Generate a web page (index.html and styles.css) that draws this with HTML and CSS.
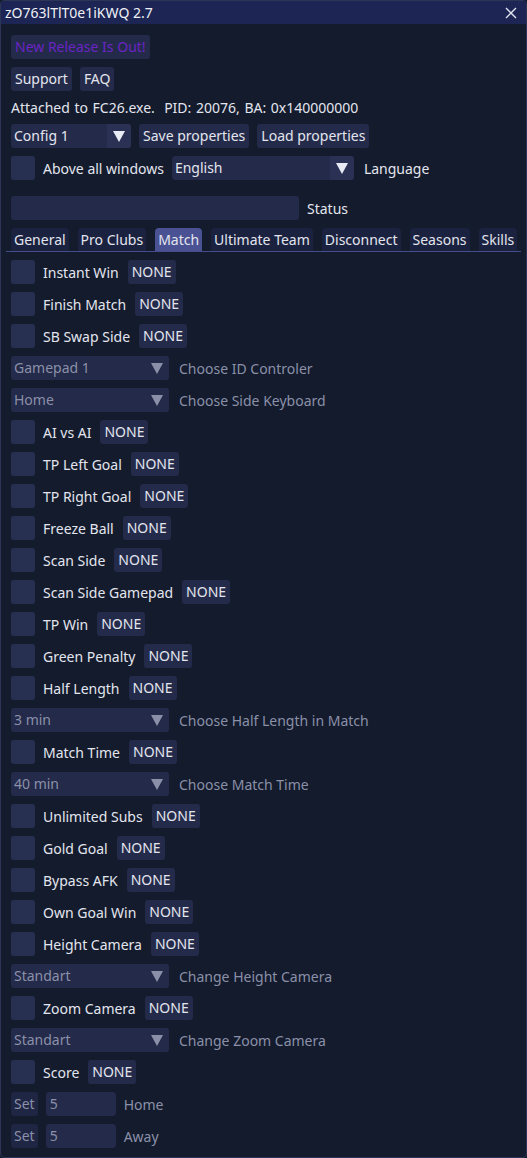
FILE: index.html
```html
<!DOCTYPE html>
<html lang="en">
<head>
  <meta charset="UTF-8">
  <title>zO763lTlT0e1iKWQ 2.7</title>
  <link rel="stylesheet" href="styles.css">
</head>
<body>

  <div class="window">
    <div class="titlebar">
      <span class="title">zO763lTlT0e1iKWQ 2.7</span>
      <svg class="close" width="12" height="12" viewBox="0 0 12 12">
        <path d="M1 1 L11 11 M11 1 L1 11" stroke="#dfe3f0" stroke-width="1.4" fill="none"/>
      </svg>
    </div>

    <div class="content">
      <div class="row"><span class="btn release">New Release Is Out!</span></div>

      <div class="row">
        <span class="btn">Support</span>
        <span class="btn">FAQ</span>
      </div>

      <div class="text-row">Attached to FC26.exe.&nbsp;&nbsp;PID: 20076, BA: 0x140000000</div>

      <div class="row">
        <div class="combo w-config"><span class="value">Config 1</span><span class="arrow"></span></div>
        <span class="btn">Save properties</span>
        <span class="btn">Load properties</span>
      </div>

      <div class="row">
        <span class="check"></span><span class="label">Above all windows</span>
        <div class="combo w-lang"><span class="value">English</span><span class="arrow"></span></div>
        <span class="label">Language</span>
      </div>

      <div class="row spaced">
        <div class="input w-status"></div>
        <span class="label">Status</span>
      </div>

      <div class="tabs">
        <span class="tab">General</span>
        <span class="tab">Pro Clubs</span>
        <span class="tab active">Match</span>
        <span class="tab">Ultimate Team</span>
        <span class="tab">Disconnect</span>
        <span class="tab">Seasons</span>
        <span class="tab">Skills</span>
      </div>

      <!-- Match tab -->
      <div class="row"><span class="check"></span><span class="label">Instant Win</span><span class="btn key">NONE</span></div>
      <div class="row"><span class="check"></span><span class="label">Finish Match</span><span class="btn key">NONE</span></div>
      <div class="row"><span class="check"></span><span class="label">SB Swap Side</span><span class="btn key">NONE</span></div>
      <div class="row">
        <div class="combo dim w-small"><span class="value">Gamepad 1</span><span class="arrow"></span></div>
        <span class="label dim">Choose ID Controler</span>
      </div>
      <div class="row">
        <div class="combo dim w-small"><span class="value">Home</span><span class="arrow"></span></div>
        <span class="label dim">Choose Side Keyboard</span>
      </div>
      <div class="row"><span class="check"></span><span class="label">AI vs AI</span><span class="btn key">NONE</span></div>
      <div class="row"><span class="check"></span><span class="label">TP Left Goal</span><span class="btn key">NONE</span></div>
      <div class="row"><span class="check"></span><span class="label">TP Right Goal</span><span class="btn key">NONE</span></div>
      <div class="row"><span class="check"></span><span class="label">Freeze Ball</span><span class="btn key">NONE</span></div>
      <div class="row"><span class="check"></span><span class="label">Scan Side</span><span class="btn key">NONE</span></div>
      <div class="row"><span class="check"></span><span class="label">Scan Side Gamepad</span><span class="btn key">NONE</span></div>
      <div class="row"><span class="check"></span><span class="label">TP Win</span><span class="btn key">NONE</span></div>
      <div class="row"><span class="check"></span><span class="label">Green Penalty</span><span class="btn key">NONE</span></div>
      <div class="row"><span class="check"></span><span class="label">Half Length</span><span class="btn key">NONE</span></div>
      <div class="row">
        <div class="combo dim w-small"><span class="value">3 min</span><span class="arrow"></span></div>
        <span class="label dim">Choose Half Length in Match</span>
      </div>
      <div class="row"><span class="check"></span><span class="label">Match Time</span><span class="btn key">NONE</span></div>
      <div class="row">
        <div class="combo dim w-small"><span class="value">40 min</span><span class="arrow"></span></div>
        <span class="label dim">Choose Match Time</span>
      </div>
      <div class="row"><span class="check"></span><span class="label">Unlimited Subs</span><span class="btn key">NONE</span></div>
      <div class="row"><span class="check"></span><span class="label">Gold Goal</span><span class="btn key">NONE</span></div>
      <div class="row"><span class="check"></span><span class="label">Bypass AFK</span><span class="btn key">NONE</span></div>
      <div class="row"><span class="check"></span><span class="label">Own Goal Win</span><span class="btn key">NONE</span></div>
      <div class="row"><span class="check"></span><span class="label">Height Camera</span><span class="btn key">NONE</span></div>
      <div class="row">
        <div class="combo dim w-small"><span class="value">Standart</span><span class="arrow"></span></div>
        <span class="label dim">Change Height Camera</span>
      </div>
      <div class="row"><span class="check"></span><span class="label">Zoom Camera</span><span class="btn key">NONE</span></div>
      <div class="row">
        <div class="combo dim w-small"><span class="value">Standart</span><span class="arrow"></span></div>
        <span class="label dim">Change Zoom Camera</span>
      </div>
      <div class="row"><span class="check"></span><span class="label">Score</span><span class="btn key">NONE</span></div>
      <div class="row">
        <span class="btn set">Set</span>
        <div class="input dim w-num">5</div>
        <span class="label dim">Home</span>
      </div>
      <div class="row">
        <span class="btn set">Set</span>
        <div class="input dim w-num">5</div>
        <span class="label dim">Away</span>
      </div>
    </div>
  </div>

</body>
</html>
```

FILE: styles.css
```css
body {
  margin: 0;
  background: #121a2c;
  font-family: 'Noto Sans', 'Open Sans', sans-serif;
  font-size: 14px;
  color: #e3e5ee;
}

.window {
  box-sizing: border-box;
  width: 527px;
  height: 1158px;
  border: 1px solid #2d3556;
  border-radius: 4px;
  background: #131b2d;
  overflow: hidden;
}

.titlebar {
  height: 23px;
  background: #1c2554;
  display: flex;
  align-items: center;
  justify-content: space-between;
  padding: 0 9px 0 4px;
}

.title {
  color: #f0f1f6;
  font-size: 14px;
}

.content {
  display: flex;
  flex-direction: column;
  gap: 8px;
  padding: 11px 10px 0 10px;
}

.row {
  display: flex;
  align-items: center;
  gap: 8px;
  height: 24px;
}

.row.spaced {
  margin-top: 8px;
}

.text-row {
  height: 17px;
  line-height: 17px;
  word-spacing: 1px;
}

.btn {
  height: 24px;
  line-height: 24px;
  padding: 0 4px;
  background: #242b4a;
  border-radius: 3px;
  white-space: nowrap;
}

.btn.release {
  color: #6a24c4;
}

.btn.key {
  margin-left: 1px;
}

.btn.set {
  color: #8b90a8;
  background: #1f2644;
  padding: 0 3px;
}

.label {
  white-space: nowrap;
}

.dim {
  color: #8b90a8;
}

.combo + .label {
  margin-left: 2px;
}

.check {
  width: 24px;
  height: 24px;
  background: #283052;
  border-radius: 3px;
  flex-shrink: 0;
}

.combo {
  display: flex;
  height: 24px;
  background: #232a4a;
  border-radius: 3px;
  overflow: hidden;
}

.combo .value {
  flex: 1;
  padding-left: 3px;
  line-height: 24px;
}

.combo .arrow {
  width: 24px;
  background: #2a3154;
  position: relative;
}

.combo .arrow::after {
  content: "";
  position: absolute;
  left: 6px;
  top: 7px;
  border-left: 6px solid transparent;
  border-right: 6px solid transparent;
  border-top: 11px solid #e8eaf4;
}

.combo.dim .arrow {
  background: #232a4a;
}

.combo.dim .arrow::after {
  border-top-color: #8b90a8;
}

.w-config { width: 120px; }
.w-lang { width: 182px; }
.w-small { width: 158px; }

.input {
  height: 24px;
  line-height: 24px;
  background: #232a4a;
  border-radius: 3px;
  padding-left: 4px;
  box-sizing: border-box;
}

.w-status { width: 288px; }
.w-num { width: 70px; }

.tabs {
  display: flex;
  gap: 9px;
  height: 23px;
  border-bottom: 1px solid #454c8c;
  margin: 0 -5px 0 -5px;
  padding: 0 5px;
}

.tab {
  height: 23px;
  line-height: 23px;
  padding: 0 3px;
  background: #1b2240;
  border-radius: 4px 4px 0 0;
  white-space: nowrap;
}

.tab.active {
  background: #4a5294;
}
```
